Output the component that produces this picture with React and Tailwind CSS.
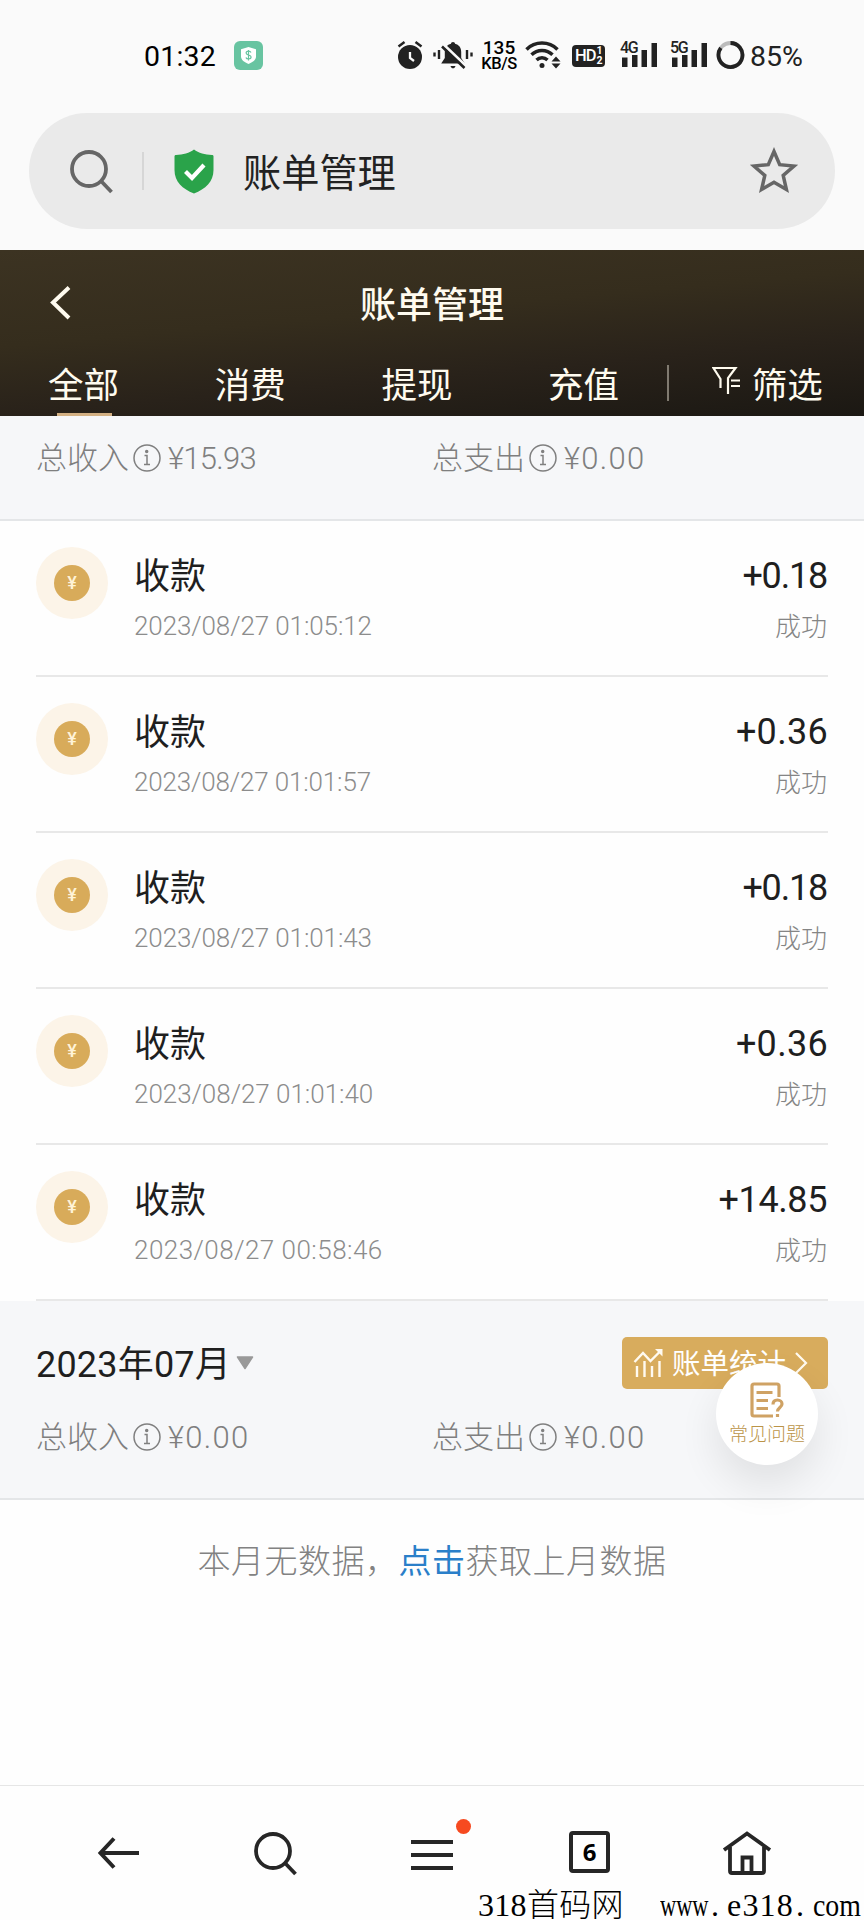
import React from "react";

const records = [
  {
    id: 1,
    time: "2023/08/27 01:05:12",
    timeClass: "tracking-[-0.1px]",
    amount: "+0.18",
    amountClass: "tracking-[-1.2px]",
  },
  {
    id: 2,
    time: "2023/08/27 01:01:57",
    timeClass: "tracking-[-0.15px]",
    amount: "+0.36",
    amountClass: "tracking-[0.3px] -mr-[1px]",
  },
  {
    id: 3,
    time: "2023/08/27 01:01:43",
    timeClass: "tracking-[-0.1px]",
    amount: "+0.18",
    amountClass: "tracking-[-1.2px]",
  },
  {
    id: 4,
    time: "2023/08/27 01:01:40",
    timeClass: "tracking-[-0.03px]",
    amount: "+0.36",
    amountClass: "tracking-[0.3px] -mr-[1px]",
  },
  {
    id: 5,
    time: "2023/08/27 00:58:46",
    timeClass: "tracking-[0.47px]",
    amount: "+14.85",
    amountClass: "tracking-[-0.4px]",
  },
];

const tabs = ["全部", "消费", "提现", "充值"];

const App = () => {
  return (
    <div className="flex h-[1920px] w-[864px] flex-col overflow-hidden bg-[#fefefe] font-['Roboto','Noto_Sans_CJK_SC',sans-serif] text-[#1f1f1f]">
      <StatusBar />
      <AddressBar />
      <Header />

      <main className="flex-1">
        <div className="h-[105px] border-b-2 border-[#e4e6e8] bg-[#f6f7f9] px-9 pt-[21px]">
          <Summary
            income="¥15.93"
            incomeClass="tracking-[-0.7px]"
            expense="¥0.00"
          />
        </div>

        <ul className="px-9">
          {records.map((record) => (
            <Record key={record.id} {...record} />
          ))}
        </ul>

        <div className="relative h-[199px] border-b-2 border-[#e4e6e8] bg-[#f6f7f9] px-9 pt-[36px]">
          <div className="flex h-[52px] items-center justify-between">
            <div className="flex items-center">
              <span className="mt-[4px] text-[36px] leading-[52px] tracking-[0.2px] text-[#1f1f1f]">
                2023年07月
              </span>
              <svg className="ml-[5px] h-[14px] w-[18px]" viewBox="0 0 18 14">
                <path
                  d="M1.5 1h15L9 12.5z"
                  fill="#999"
                  stroke="#999"
                  strokeWidth="1.5"
                  strokeLinejoin="round"
                />
              </svg>
            </div>
            <button className="flex h-[52px] w-[206px] items-center rounded-[5px] bg-[#d8ac5d] pl-[11px] text-white">
              <ChartIcon />
              <span className="mt-[4px] ml-[8px] text-[28.5px] leading-[52px]">
                账单统计
              </span>
              <svg
                className="ml-2 h-6 w-[14px]"
                viewBox="0 0 14 24"
                fill="none"
                stroke="#fffaf0"
                strokeWidth="2.2"
              >
                <path d="M2 2l10 10L2 22" />
              </svg>
            </button>
          </div>
          <div className="mt-[27px]">
            <Summary
              income="¥0.00"
              incomeClass="tracking-[1.3px]"
              expense="¥0.00"
            />
          </div>

          {/* floating help entry */}
          <button className="absolute top-[62px] right-[46px] flex size-[102px] flex-col items-center rounded-full bg-white pt-[19px] shadow-[0_20px_40px_rgba(0,0,0,0.09)]">
            <HelpIcon />
            <span className="mt-[5px] text-[19px] leading-[24px] font-light text-[#bb9448]">
              常见问题
            </span>
          </button>
        </div>

        <p className="pt-[37px] text-center text-[33px] leading-[50px] font-light tracking-[0.5px] text-[#828282]">
          本月无数据，
          <a className="font-normal text-[#2a7fc9]">点击</a>
          获取上月数据
        </p>
      </main>

      <BottomBar />
    </div>
  );
};

const StatusBar = () => (
  <div className="flex h-[113px] shrink-0 items-start bg-[#fafafa] pt-[40px] text-[#222]">
    <span className="ml-[144px] w-[90px] text-[28.5px] leading-[34px] tracking-[0.2px] text-black">
      01:32
    </span>
    <svg className="mt-px h-[29px] w-[29px]" viewBox="0 0 29 29">
      <rect width="29" height="29" rx="6" fill="#68c4a1" />
      <path
        d="M14.5 6l7.5 2.3v7.2c0 3.4-3.5 5.8-7.5 7.5-4-1.7-7.5-4.1-7.5-7.5V8.3z"
        fill="#fff"
      />
      <path
        d="M17 11.5c-.5-1-1.4-1.3-2.5-1.3-1.4 0-2.4.7-2.4 1.9 0 2.8 5 1.3 5 4 0 1.2-1.1 1.9-2.6 1.9-1.2 0-2.2-.5-2.6-1.5M14.5 9v10.5"
        fill="none"
        stroke="#68c4a1"
        strokeWidth="1.2"
      />
    </svg>

    <svg className="ml-[134px] h-[30px] w-[26px]" viewBox="0 0 26 30">
      <circle cx="13" cy="17" r="12" fill="#222" />
      <path
        d="M1.5 6.5l6-4.5M24.5 6.5l-6-4.5"
        stroke="#222"
        strokeWidth="2.5"
      />
      <path d="M13 12v6l4 3" fill="none" stroke="#fafafa" strokeWidth="2.3" />
    </svg>

    <svg className="ml-[10px] h-[30px] w-[40px]" viewBox="0 0 40 30">
      <path
        d="M20 2c1.2 0 2 .8 2 1.8 4 .9 6.2 4 6.2 8.2v6l3.6 5.5H8.2l3.6-5.5v-6c0-4.2 2.2-7.3 6.2-8.2C18 2.8 18.8 2 20 2z"
        fill="#222"
      />
      <path
        d="M17.5 26h5c-.5 1.6-1.3 2.3-2.5 2.3s-2-.7-2.5-2.3z"
        fill="#222"
      />
      <path d="M10.5 4.5l22 21" stroke="#fafafa" strokeWidth="3" />
      <path d="M9 6.5l22.5 21.5" stroke="#222" strokeWidth="2.6" />
      <path
        d="M1.5 12.5v4M6 10v9M34 10v9M38.5 12.5v4"
        stroke="#222"
        strokeWidth="2.4"
      />
    </svg>

    <div className="ml-[7px] flex w-[38px] flex-col items-center text-black">
      <span className="text-[19px] leading-[15px] font-medium">135</span>
      <span className="mt-[1px] text-[16.5px] leading-[15px] font-medium tracking-[-0.5px]">
        KB/S
      </span>
    </div>

    <svg
      className="ml-[7px] h-[30px] w-[37px]"
      viewBox="0 0 37 30"
      fill="none"
      stroke="#222"
      strokeWidth="3.5"
    >
      <path d="M1.5 9.5a22 22 0 0 1 31 0M6.5 14.8a15 15 0 0 1 21 0M11.5 20a8 8 0 0 1 11 0" />
      <circle cx="17" cy="25.5" r="2.5" fill="#222" stroke="none" />
      <path
        d="M26.5 21.5l4.5-5 4.5 5zM26.5 23.5l4.5 5 4.5-5z"
        fill="#222"
        stroke="none"
      />
    </svg>

    <div className="mt-[5px] ml-[10px] flex h-[22px] w-[33px] items-center rounded-[4px] bg-[#222] pl-[3px] text-white">
      <span className="text-[16.5px] leading-[22px] font-medium tracking-[-1px]">
        HD
      </span>
      <span className="ml-px flex flex-col text-[10.5px] leading-[10px] font-bold">
        <span>1</span>
        <span>2</span>
      </span>
    </div>

    <Signal label="4G" className="ml-[14px]" />
    <Signal label="5G" className="ml-[11px]" />

    <svg
      className="ml-[8px] h-[30px] w-[29px]"
      viewBox="0 0 29 30"
      fill="none"
      strokeWidth="3.8"
    >
      <circle cx="14.5" cy="15" r="12" stroke="#bbb" />
      <path d="M14.5 3a12 12 0 1 1-9.7 4.9" stroke="#222" />
    </svg>
    <span className="ml-[5px] text-[28.5px] leading-[34px]">85%</span>
  </div>
);

const Signal = ({ label, className }) => (
  <div className={`relative h-[30px] w-[39px] ${className}`}>
    <svg className="h-[30px] w-[39px]" viewBox="0 0 39 30" fill="#222">
      <path d="M3 17.5h5.5V27H3zM13 15h5.5v12H13zM22.5 10H28v17h-5.5zM32.5 3H38v24h-5.5z" />
    </svg>
    <span className="absolute top-[1px] left-[1px] bg-[#fafafa] text-[16px] leading-[13px] font-medium tracking-[-1.3px]">
      {label}
    </span>
  </div>
);

const AddressBar = () => (
  <div className="h-[137px] shrink-0 bg-[#fafafa] px-[29px]">
    <div className="flex h-[116px] items-center rounded-full bg-[#eaeaea]">
      <SearchIcon className="ml-[40px] size-[45px] text-[#666]" />
      <span className="ml-[28px] h-[38px] w-[2px] bg-[#d6d6d6]" />
      <svg className="ml-[30px] h-[45px] w-[40px]" viewBox="0 0 40 45">
        <path
          d="M20 .5c4.5 3.5 11 5 18 5.5 1 0 1.5.5 1.5 1.5V21c0 12-8 19-19.5 23.5C8.5 40 .5 33 .5 21V7.5C.5 6.5 1 6 2 6 9 5.5 15.5 4 20 .5z"
          fill="#2aa34a"
        />
        <path
          d="M11.5 22.5l6.5 6.5 12-13"
          fill="none"
          stroke="#fff"
          strokeWidth="4.2"
        />
      </svg>
      <span className="mt-[5px] ml-[29px] text-[38.2px] leading-[56px] text-[#222]">
        账单管理
      </span>
      <svg
        className="mr-[36px] ml-auto size-[50px]"
        viewBox="0 0 50 50"
        fill="none"
        stroke="#666"
        strokeWidth="3.5"
      >
        <path d="M25 5.5l5.7 13.2 14.3 1.3-10.8 9.5 3.2 14L25 36.2 12.6 43.5l3.2-14L5 20l14.3-1.3z" />
      </svg>
    </div>
  </div>
);

const Header = () => (
  <header className="h-[166px] shrink-0 bg-[linear-gradient(175deg,#3c3322_0%,#352d1d_40%,#29221a_68%,#1b1813_100%)] text-[#fffbef]">
    <div className="flex h-[106px] items-center">
      <svg
        className="ml-[48px] h-[36px] w-[24px]"
        viewBox="0 0 24 36"
        fill="none"
        stroke="#fffbef"
        strokeWidth="4"
      >
        <path d="M21 2.5L5 17.5 21 33" />
      </svg>
      <h1 className="mt-[5px] mr-[72px] flex-1 text-center text-[36px] leading-[52px] font-medium">
        账单管理
      </h1>
    </div>
    <div className="flex h-[60px] items-start">
      <nav className="flex pl-[48px]">
        {tabs.map((tab, i) => (
          <div
            key={tab}
            className="flex h-[60px] w-[166.7px] flex-col items-start pt-[4px] text-[35.5px] leading-[52px]"
          >
            {tab}
            {i === 0 && (
              <i className="mt-[1px] ml-[9px] h-[3px] w-[55px] bg-[#d3b083]" />
            )}
          </div>
        ))}
      </nav>
      <span className="mt-[9px] -ml-[48px] h-[36px] w-[2px] bg-[#807a70]" />
      <svg
        className="mt-[10px] ml-[43px] h-[30px] w-[29px]"
        viewBox="0 0 29 30"
        fill="none"
        stroke="#fffbef"
        strokeWidth="2.2"
      >
        <path d="M8.5 22v-9L1.5 2h22L16 12v16M19 14.5h9M19 20h9" />
      </svg>
      <span className="mt-[4px] ml-[11px] text-[35.5px] leading-[52px]">
        筛选
      </span>
    </div>
  </header>
);

const Summary = ({ income, incomeClass, expense }) => (
  <div className="flex h-[44px] items-center text-[31px] leading-[44px] font-light text-[#7f7f7f]">
    <div className="flex w-[396px] items-center">
      总收入
      <InfoIcon />
      <span className={incomeClass}>{income}</span>
    </div>
    <div className="flex items-center">
      总支出
      <InfoIcon />
      <span className="tracking-[1.3px]">{expense}</span>
    </div>
  </div>
);

const InfoIcon = () => (
  <svg
    className="mr-[7px] mb-[2px] ml-[4px] size-[28px]"
    viewBox="0 0 28 28"
    fill="none"
    stroke="#808080"
    strokeWidth="1.5"
  >
    <circle cx="14" cy="14" r="13" />
    <path d="M11.5 11.5H14V20.5M11 20.5h6" />
    <circle cx="13.7" cy="7.5" r="1" fill="#888" />
  </svg>
);

const Record = ({ time, timeClass, amount, amountClass }) => (
  <li className="flex h-[156px] border-b-2 border-[#e8e8e8]">
    <div className="mt-[26px] flex size-[72px] items-center justify-center rounded-full bg-[#fcf4e8]">
      <span className="flex size-[36px] items-center justify-center rounded-full bg-[#d8ab5a] text-[18px] leading-none font-medium text-[#fff3d8]">
        ¥
      </span>
    </div>
    <div className="ml-[26px] flex-1 pt-[30px]">
      <div className="text-[36px] leading-[52px]">收款</div>
      <div
        className={`mt-[5px] text-[26px] leading-[36px] font-light text-[#8c8c8c] ${timeClass}`}
      >
        {time}
      </div>
    </div>
    <div className="flex flex-col items-end pt-[29px] pr-[1px]">
      <div className={`text-[36px] leading-[52px] ${amountClass}`}>
        {amount}
      </div>
      <div className="mt-[7px] text-[26px] leading-[36px] font-light text-[#858585]">
        成功
      </div>
    </div>
  </li>
);

const ChartIcon = () => (
  <svg
    className="h-[30px] w-[31px]"
    viewBox="0 0 31 30"
    fill="none"
    stroke="#fffaf0"
    strokeWidth="2.4"
  >
    <path d="M1.5 14L10 5l7.5 8L28 2.5" />
    <path d="M22 1h7.5v7.5z" fill="#fffaf0" stroke="none" />
    <path d="M4 18v11M11.5 13v16M19 18v11M26.5 13v16" />
  </svg>
);

const HelpIcon = () => (
  <svg
    className="h-[36px] w-[34px] shrink-0"
    viewBox="0 0 34 36"
    fill="none"
    stroke="#cfa264"
    strokeWidth="3.2"
  >
    <path d="M29 15V4a2 2 0 0 0-2-2H4a2 2 0 0 0-2 2v28a2 2 0 0 0 2 2h19" />
    <path d="M6.5 10.5h16M6.5 18.5h11.5M6.5 26.5h11.5" />
    <path d="M23 22.5c0-3 2-4.5 4.5-4.5s4.5 1.7 4.5 4c0 3.5-4.5 3.5-4.5 7.5M27.5 32v3" />
  </svg>
);

const SearchIcon = ({ className }) => (
  <svg
    className={className}
    viewBox="0 0 45 45"
    fill="none"
    stroke="currentColor"
    strokeWidth="3.8"
  >
    <circle cx="20" cy="20" r="17" />
    <path d="M32 32l10.5 11" />
  </svg>
);

const BottomBar = () => (
  <footer className="relative flex h-[135px] shrink-0 items-start border-t border-[#e6e6e6] bg-[#fefefe] pt-[45px]">
    <svg
      className="ml-[96px] h-[44px] w-[44px]"
      viewBox="0 0 44 44"
      fill="none"
      stroke="#262626"
      strokeWidth="4"
    >
      <path d="M18 7.5L4.5 22 18 36.5M4.5 22H43" />
    </svg>
    <SearchIcon className="ml-[113px] size-[45px] text-[#262626]" />
    <div className="relative ml-[113px]">
      <svg
        className="h-[44px] w-[42px]"
        viewBox="0 0 42 44"
        stroke="#262626"
        strokeWidth="3.8"
      >
        <path d="M0 11h42M0 24h42M0 37h42" />
      </svg>
      <i className="absolute -top-[12px] left-[45px] size-[15px] rounded-full bg-[#f64a20]" />
    </div>
    <span className="ml-[116px] flex h-[42px] w-[41px] items-center justify-center rounded-[4px] border-[4px] border-[#262626] font-['Open_Sans'] text-[24px] leading-none font-bold text-black">
      6
    </span>
    <svg
      className="ml-[112px] h-[46px] w-[50px]"
      viewBox="0 0 50 46"
      fill="none"
      stroke="#262626"
      strokeWidth="3.8"
    >
      <path d="M2 19L25 2.5l23 16.5M8 16v24a2 2 0 0 0 2 2h30a2 2 0 0 0 2-2V16M20.5 42V26.5h9V42" />
    </svg>

    <div className="absolute right-0 bottom-0 flex h-[30px] w-[386px] items-center font-['Liberation_Serif','Noto_Sans_CJK_SC',serif] text-[32px] leading-[30px] whitespace-nowrap text-black">
      <span className="w-[182px] shrink-0 tracking-[0.3px] font-light">
        318首码网
      </span>
      <span className="w-[51px] shrink-0">
        <span className="inline-block origin-left scale-x-[0.7]">www</span>
      </span>
      <span className="w-[16px] shrink-0">.</span>
      <span className="w-[69px] shrink-0 tracking-[1.2px]">e318</span>
      <span className="w-[17px] shrink-0">.</span>
      <span className="w-[50px] shrink-0">
        <span className="inline-block origin-left scale-x-[0.87]">com</span>
      </span>
    </div>
  </footer>
);

export default App;
